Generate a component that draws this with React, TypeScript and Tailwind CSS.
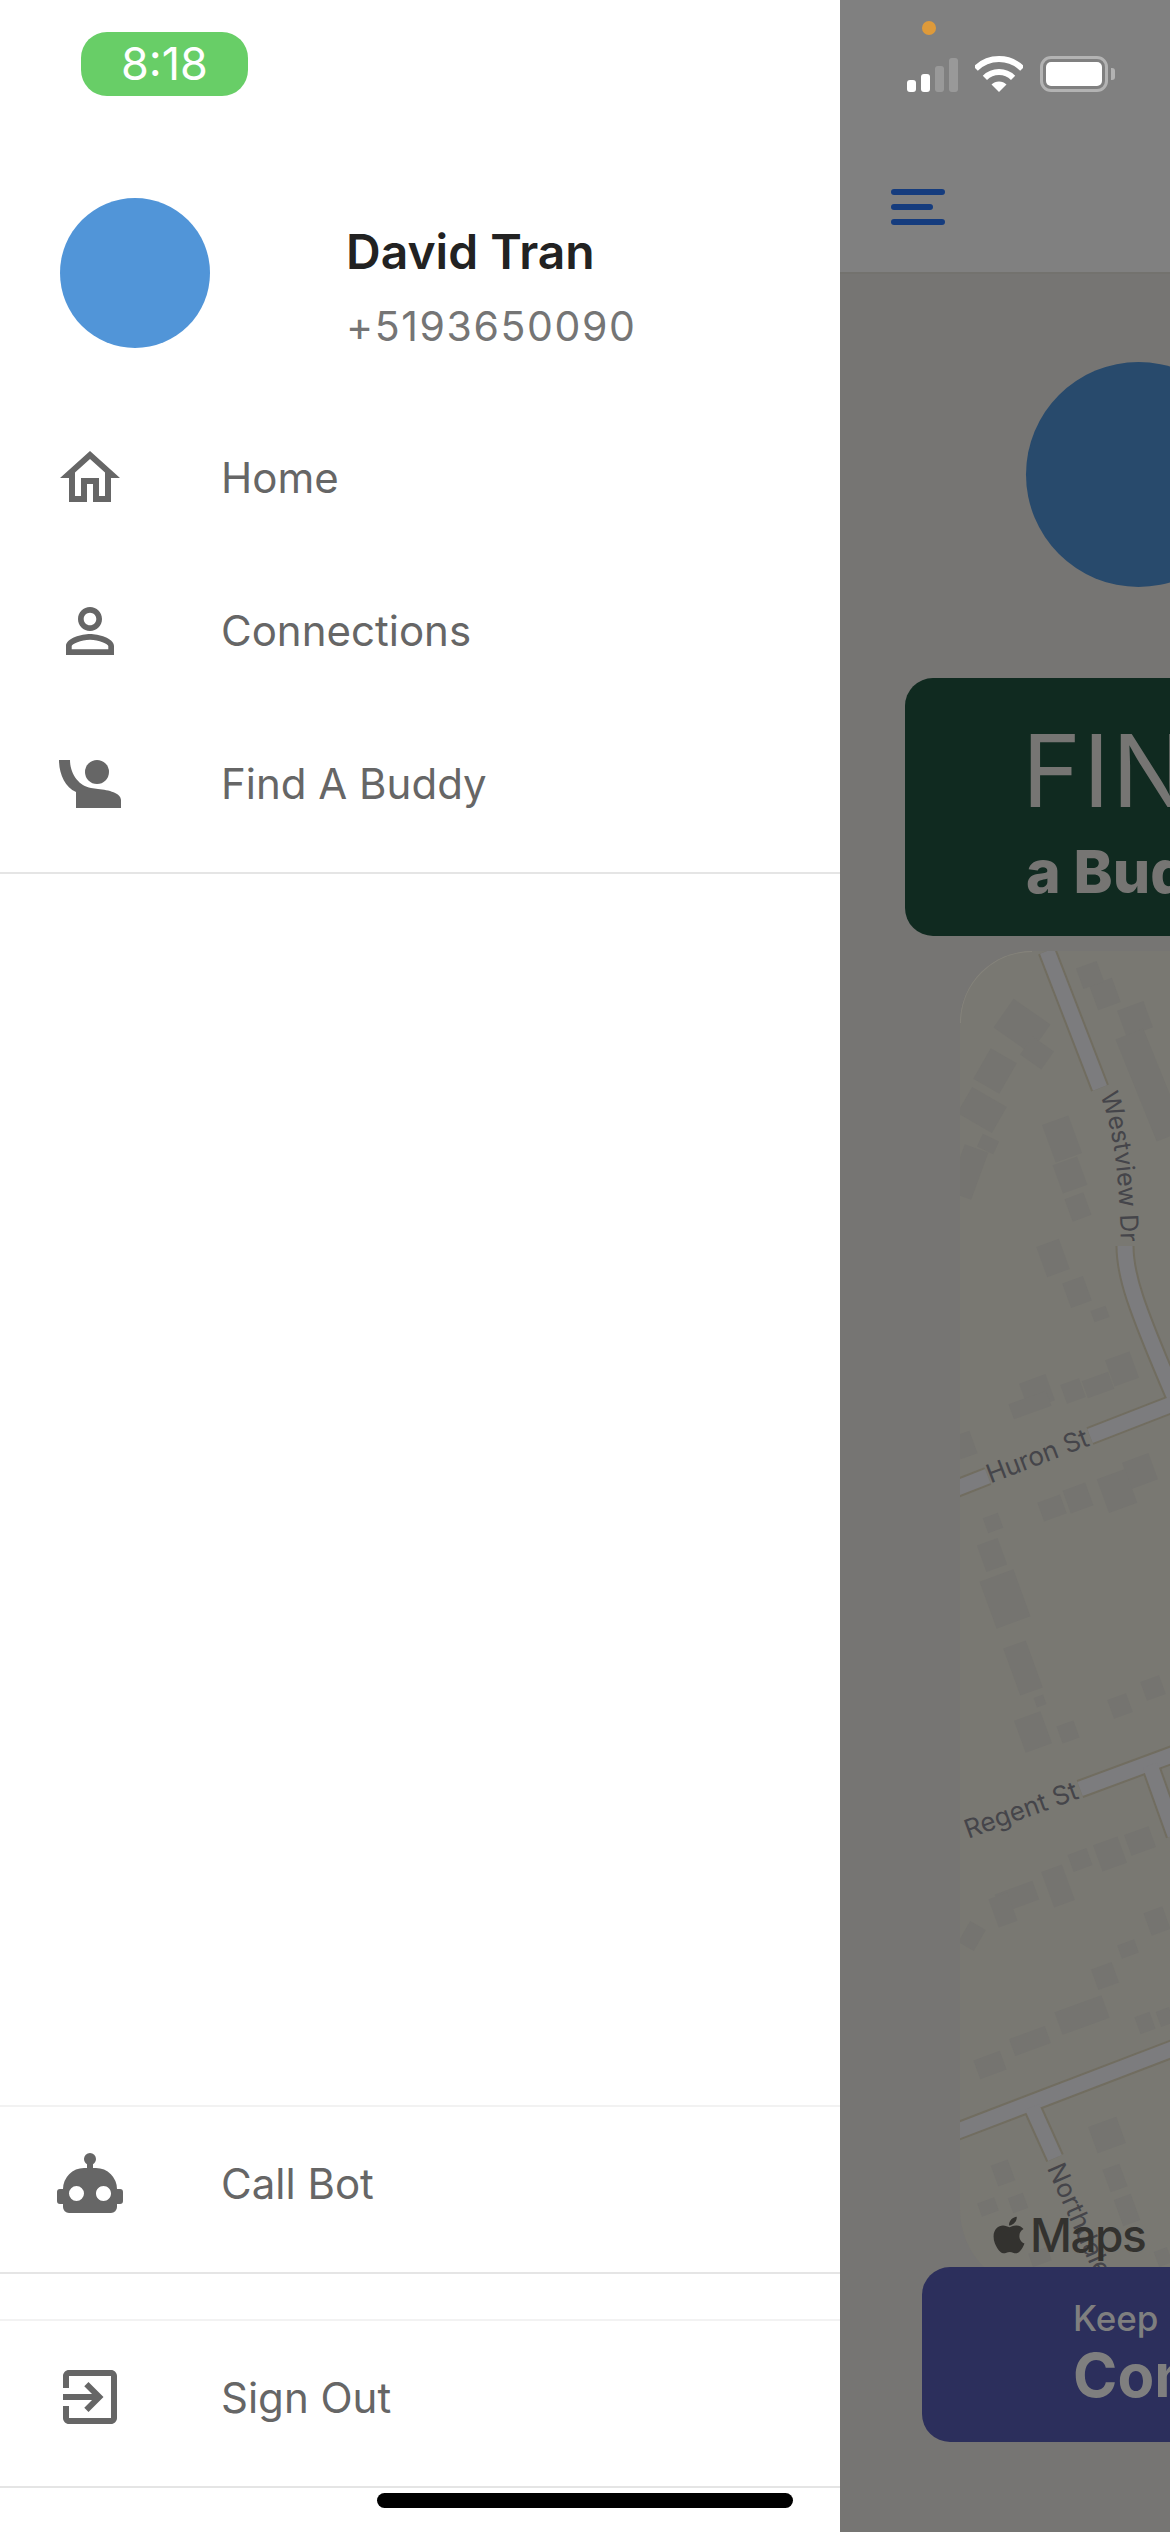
import { FaApple } from "react-icons/fa";

const ICON_PATHS = {
  home: "M12 5.69L17 10.19V18H15V12H9V18H7V10.19L12 5.69M12 3L2 12H5V20H11V14H13V20H19V12H22L12 3Z",
  person:
    "M12 5.9c1.16 0 2.1.94 2.1 2.1s-.94 2.1-2.1 2.1S9.9 9.16 9.9 8s.94-2.1 2.1-2.1m0 9c2.97 0 6.1 1.46 6.1 2.1v1.1H5.9V17c0-.64 3.13-2.1 6.1-2.1M12 4C9.79 4 8 5.79 8 8s1.79 4 4 4 4-1.79 4-4-1.79-4-4-4zm0 9c-2.67 0-8 1.34-8 4v3h16v-3c0-2.66-5.33-4-8-4z",
  robot:
    "M12,2A2,2 0 0,1 14,4C14,4.74 13.6,5.39 13,5.73V7H14A7,7 0 0,1 21,14H22A1,1 0 0,1 23,15V18A1,1 0 0,1 22,19H21V20A2,2 0 0,1 19,22H5A2,2 0 0,1 3,20V19H2A1,1 0 0,1 1,18V15A1,1 0 0,1 2,14H3A7,7 0 0,1 10,7H11V5.73C10.4,5.39 10,4.74 10,4A2,2 0 0,1 12,2M7.5,13A2.5,2.5 0 0,0 5,15.5A2.5,2.5 0 0,0 7.5,18A2.5,2.5 0 0,0 10,15.5A2.5,2.5 0 0,0 7.5,13M16.5,13C15.12,13 14,14.12 14,15.5C14,16.88 15.12,18 16.5,18C17.88,18 19,16.88 19,15.5C19,14.12 17.88,13 16.5,13Z",
  exit: "M10.09 15.59L11.5 17l5-5-5-5-1.41 1.41L12.67 11H3v2h9.67l-2.58 2.59zM19 3H5c-1.11 0-2 .9-2 2v4h2V5h14v14H5v-4H3v4c0 1.1.89 2 2 2h14c1.1 0 2-.9 2-2V5c0-1.1-.9-2-2-2z",
};

function Icon({ d }: { d: string }) {
  return (
    <svg viewBox="0 0 24 24" className="w-[72px] h-[72px] fill-[#666666]">
      <path d={d} />
    </svg>
  );
}

function RaisedHand() {
  return (
    <svg viewBox="0 0 62 48" className="w-[62px] h-[48px] fill-[#666666]">
      <path d="M0 0H11C11 14 20 26 32 28L39 29C50 30 62 33 62 40V48H17V32C6 27 0 14 0 0Z" />
      <circle cx="38" cy="12" r="12" />
    </svg>
  );
}

function MenuItem({ icon, label }: { icon: React.ReactNode; label: string }) {
  return (
    <div className="flex items-center h-[153px]">
      <div className="ml-[54px] w-[72px] flex justify-center">{icon}</div>
      <span className="ml-[95px] text-[42px] text-[#666666]">{label}</span>
    </div>
  );
}

function FooterItem({ d, label }: { d: string; label: string }) {
  return (
    <div className="flex items-center h-[169px] pb-[13px] border-y-2 border-t-[#f2f2f2] border-b-[#e5e5e5]">
      <div className="ml-[54px] w-[72px] flex justify-center">
        <Icon d={d} />
      </div>
      <span className="ml-[95px] text-[42px] text-[#666666]">{label}</span>
    </div>
  );
}

// cx, cy, w, h, angle in page pixels
const BUILDINGS: number[][] = [
  [1022, 1026, 45, 35, 35], [1037, 1053, 26, 22, 35], [995, 1071, 30, 35, 30], [982, 1110, 40, 30, 30],
  [988, 1144, 18, 14, 25], [968, 1172, 25, 50, 20], [1062, 1139, 28, 40, -20], [1070, 1175, 26, 30, -20],
  [1078, 1207, 20, 24, -20], [1053, 1258, 24, 32, -20], [1077, 1292, 22, 26, -20], [1100, 1314, 16, 12, -20],
  [1122, 1369, 26, 28, -20], [1098, 1385, 28, 18, -20], [1073, 1391, 20, 20, -20], [1037, 1392, 28, 28, -20],
  [1030, 1405, 40, 16, -20], [1105, 994, 24, 26, -20], [1135, 1019, 28, 28, -20], [1150, 1085, 30, 110, -22],
  [1090, 975, 22, 22, -20], [1140, 1471, 28, 28, -20], [1117, 1491, 30, 36, -20], [1078, 1498, 24, 24, -20],
  [1052, 1508, 24, 20, -20], [993, 1523, 16, 16, -20], [965, 1445, 18, 24, -20], [992, 1555, 22, 28, -20],
  [1005, 1599, 36, 50, -20], [1023, 1668, 24, 50, -20], [1040, 1701, 10, 10, -20], [1033, 1732, 28, 34, -20],
  [1068, 1732, 18, 18, -20], [1120, 1706, 20, 20, -20], [1153, 1688, 20, 20, -20], [1140, 1841, 26, 22, -20],
  [1110, 1854, 26, 28, -20], [1080, 1860, 20, 18, -20], [1058, 1886, 22, 38, -20], [1017, 1897, 40, 20, -20],
  [1003, 1910, 20, 30, -20], [972, 1936, 18, 24, 30], [1157, 1921, 20, 24, -20], [1128, 1949, 18, 14, -20],
  [1105, 1976, 22, 22, -20], [1082, 2015, 50, 24, -20], [1030, 2041, 38, 18, -20], [990, 2065, 28, 20, -20],
  [1145, 2023, 16, 18, -20], [1165, 2017, 14, 16, -20], [1107, 2135, 30, 28, -20], [1115, 2178, 18, 24, -20],
  [1127, 2210, 18, 28, -20], [1003, 2173, 18, 22, -20], [988, 2207, 18, 14, -20], [1018, 2203, 16, 16, -20],
  [1040, 2257, 20, 14, -20], [1163, 2257, 14, 16, -20],
];

// streets stop where their label sits, as on the map
const ROADS = [
  "M1047 951L1100 1088",
  "M1125 1246C1125 1275 1135 1305 1175 1398",
  "M950 1491L988 1476",
  "M1090 1436L1180 1401",
  "M1080 1789L1180 1752",
  "M1150 1765L1175 1835",
  "M950 2134L1180 2046",
  "M1032 2107L1055 2158",
];

const WESTVIEW = "M1100 1095C1114 1130 1121 1180 1121 1270";

function MapView() {
  return (
    <svg
      viewBox="960 951 210 1339"
      className="block w-[210px] h-[1339px] bg-[#797872] rounded-tl-[72px] rounded-bl-[80px]"
    >
      {BUILDINGS.map(([cx, cy, w, h, a], i) => (
        <rect
          key={i}
          x={cx - w / 2}
          y={cy - h / 2}
          width={w}
          height={h}
          fill="#757470"
          transform={`rotate(${a} ${cx} ${cy})`}
        />
      ))}
      {ROADS.map((d) => (
        <path key={d} d={d} fill="none" stroke="#716d60" strokeWidth="19" strokeLinejoin="round" />
      ))}
      {ROADS.map((d) => (
        <path key={d + "i"} d={d} fill="none" stroke="#7c7c7e" strokeWidth="15" strokeLinejoin="round" />
      ))}
      <path d="M960 1023A72 72 0 0 1 1032 951" fill="none" stroke="#85837b" strokeWidth="2" />
      <defs>
        <path id="westview" d={WESTVIEW} />
      </defs>
      <g fill="#45454a" fontSize="26" stroke="#797872" strokeWidth="4" paintOrder="stroke">
        <text fontSize="25">
          <textPath href="#westview">Westview Dr</textPath>
        </text>
        <text x="1037" y="1465" textAnchor="middle" transform="rotate(-21 1037 1455)">
          Huron St
        </text>
        <text x="1021" y="1819" textAnchor="middle" transform="rotate(-20 1021 1810)">
          Regent St
        </text>
        <text x="1056" y="2174" transform="rotate(66 1056 2164)">
          Northdale
        </text>
      </g>
    </svg>
  );
}

function StatusIcons() {
  return (
    <div className="flex items-end ml-[67px] mt-[20px] h-[37px]">
      <div className="flex items-end gap-[5px]">
        <div className="w-[9px] h-[12px] rounded-[3px] bg-white" />
        <div className="w-[9px] h-[18px] rounded-[3px] bg-white" />
        <div className="w-[9px] h-[26px] rounded-[3px] bg-[#999999]" />
        <div className="w-[9px] h-[34px] rounded-[3px] bg-[#999999]" />
      </div>
      <svg viewBox="0 0 48 36" className="ml-[17px] w-[48px] h-[36px]">
        <path d="M0.7 12.7A33 33 0 0 1 47.3 12.7" fill="none" stroke="white" strokeWidth="6" />
        <path d="M9.9 21.9A20 20 0 0 1 38.1 21.9" fill="none" stroke="white" strokeWidth="6" />
        <path d="M24 36L16.5 28.5A10.6 10.6 0 0 1 31.5 28.5Z" fill="white" />
      </svg>
      <div className="ml-[17px] flex items-center">
        <div className="w-[68px] h-[36px] rounded-[11px] border-[3px] border-[#b3b3b3] p-[3px]">
          <div className="w-full h-full rounded-[5px] bg-white" />
        </div>
        <div className="ml-[3px] w-[4px] h-[12px] rounded-r-[3px] bg-[#b3b3b3]" />
      </div>
    </div>
  );
}

export default function App() {
  return (
    <div className="flex w-[1170px] h-[2532px] overflow-hidden bg-white font-['Inter',sans-serif]">
      <aside className="flex flex-col w-[840px] h-[2532px] shrink-0 bg-white">
        <div className="ml-[81px] mt-[32px] w-[167px] h-[64px] rounded-[26px] bg-[#68ce67] flex items-center justify-center text-[45px] text-white">
          8:18
        </div>
        <div className="flex items-start mt-[102px] ml-[60px]">
          <div className="w-[150px] h-[150px] rounded-full bg-[#5195d8]" />
          <div className="ml-[136px] mt-[25px]">
            <p className="text-[48px] leading-[58px] font-semibold text-[#222222]">David Tran</p>
            <p className="mt-[20px] text-[41px] leading-[50px] tracking-[1.6px] text-[#757575]">+5193650090</p>
          </div>
        </div>
        <nav className="mt-[50px] pb-[12px] border-b-2 border-[#e5e5e5]">
          <MenuItem icon={<Icon d={ICON_PATHS.home} />} label="Home" />
          <MenuItem icon={<Icon d={ICON_PATHS.person} />} label="Connections" />
          <MenuItem icon={<RaisedHand />} label="Find A Buddy" />
        </nav>
        <div className="flex-1" />
        <FooterItem d={ICON_PATHS.robot} label="Call Bot" />
        <div className="h-[45px]" />
        <FooterItem d={ICON_PATHS.exit} label="Sign Out" />
        <div className="ml-[377px] mt-[5px] mb-[24px] w-[416px] h-[15px] rounded-full bg-black" />
      </aside>

      <main className="flex flex-col w-[330px] h-[2532px] shrink-0 overflow-hidden bg-[#767573]">
        <header className="h-[274px] shrink-0 bg-[#808080] border-b-2 border-[#73726e] pt-[21px]">
          <div className="ml-[82px] w-[14px] h-[14px] rounded-full bg-[#de9a3a]" />
          <StatusIcons />
          <div className="ml-[51px] mt-[97px] flex flex-col gap-[9px]">
            <div className="w-[54px] h-[6px] rounded-full bg-[#153c7e]" />
            <div className="w-[42px] h-[6px] rounded-full bg-[#153c7e]" />
            <div className="w-[54px] h-[6px] rounded-full bg-[#153c7e]" />
          </div>
        </header>
        <div className="ml-[186px] mt-[88px] w-[225px] h-[225px] shrink-0 rounded-full bg-[#284a6c]" />
        <div className="ml-[65px] mt-[91px] w-[500px] h-[258px] shrink-0 rounded-[28px] bg-[#102a20] pl-[117px] pt-[33px] text-[#767573] whitespace-nowrap">
          <p className="text-[100px] leading-[120px] font-normal tracking-[2px]">FIND</p>
          <p className="mt-[6px] ml-[4px] text-[59px] leading-[70px] font-extrabold">a Buddy</p>
        </div>
        <div className="relative ml-[120px] mt-[15px] shrink-0">
          <MapView />
          <div className="absolute left-[28px] top-[1262px] flex items-center text-[#33322f]">
            <FaApple className="w-[42px] h-[42px]" />
            <span className="text-[46px] leading-[44px] font-medium tracking-[-1.5px]">Maps</span>
          </div>
        </div>
        <div className="relative ml-[82px] -mt-[23px] w-[500px] h-[175px] shrink-0 rounded-[28px] bg-[#2c2f5c] pl-[151px] pt-[30px] text-[#7f7f7f] whitespace-nowrap">
          <p className="text-[35px] leading-[42px] font-medium">Keep</p>
          <p className="text-[60px] leading-[72px] font-bold">Connected</p>
        </div>
      </main>
    </div>
  );
}
